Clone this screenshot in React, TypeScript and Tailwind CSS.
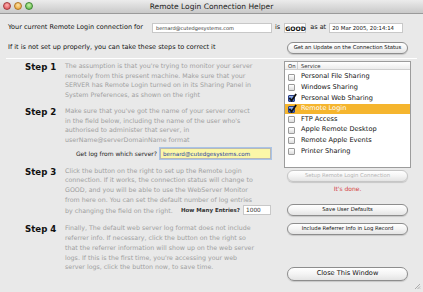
import React from "react";

const F = { fontFamily: '"DejaVu Sans", "Liberation Sans", sans-serif' } as const;

function Btn({ children, disabled, big }: { children: React.ReactNode; disabled?: boolean; big?: boolean }) {
  return (
    <div
      className={`flex items-center justify-center whitespace-nowrap rounded-full border bg-gradient-to-b from-white via-[#f4f4f4] to-[#e4e4e4] shadow-[0_1px_1px_rgba(0,0,0,0.15)] ${big ? "h-[14px] text-[6.6px]" : "h-[12px] text-[5.3px]"} ${disabled ? "text-[#b4b4b4] border-[#c6c6c6]" : "text-[#111] border-[#8d8d8d]"}`}
      style={F}
    >
      {children}
    </div>
  );
}

function Check({ on }: { on?: boolean }) {
  return (
    <div className={`w-[7px] h-[7px] rounded-[1px] border ${on ? "border-[#2a3f88] bg-gradient-to-b from-[#9bb8ef] to-[#3d66c5]" : "border-[#9a9a9a] bg-gradient-to-b from-white to-[#dcdcdc]"} relative`}>
      {on && (
        <svg viewBox="0 0 10 10" className="absolute left-[-1px] top-[-3px] w-[9px] h-[9px]">
          <path d="M1.5 5.5 L4 8.5 L9 1" fill="none" stroke="#111" strokeWidth="2" />
        </svg>
      )}
    </div>
  );
}

function StepText({ lines }: { lines: string[] }) {
  return (
    <div className="text-[6.3px] leading-[9.7px] text-[#a0a0a0]" style={F}>
      {lines.map((l, i) => (
        <div key={i} className="whitespace-nowrap">{l}</div>
      ))}
    </div>
  );
}

function Step({ n, children }: { n: number; children: React.ReactNode }) {
  return (
    <div className="flex">
      <div className="w-[65px] pl-[25px] pt-[1px] text-[8.6px] font-bold text-[#111] leading-[11px] whitespace-nowrap" style={F}>
        Step {n}
      </div>
      <div className="flex-1">{children}</div>
    </div>
  );
}

export default function App() {
  const services: { name: string; on?: boolean; sel?: boolean }[] = [
    { name: "Personal File Sharing" },
    { name: "Windows Sharing" },
    { name: "Personal Web Sharing", on: true },
    { name: "Remote Login", on: true, sel: true },
    { name: "FTP Access" },
    { name: "Apple Remote Desktop" },
    { name: "Remote Apple Events" },
    { name: "Printer Sharing" },
  ];
  return (
    <div className="w-[423px] h-[292px] bg-[#e9e9e9] overflow-hidden relative flex flex-col" style={F}>
      {/* title bar */}
      <div className="h-[14px] bg-gradient-to-b from-[#ececec] to-[#c9c9c9] border-b border-[#9a9a9a] relative flex items-center justify-center">
        <div className="absolute left-[3px] top-[2px] flex gap-[3px]">
          <div className="w-[8px] h-[8px] rounded-full bg-[radial-gradient(circle_at_50%_35%,#ffb3b3,#d9454a)] border border-[#a13a3e]" />
          <div className="w-[8px] h-[8px] rounded-full bg-[radial-gradient(circle_at_50%_35%,#ffe3a3,#e39a26)] border border-[#b07523]" />
          <div className="w-[8px] h-[8px] rounded-full bg-[radial-gradient(circle_at_50%_35%,#c8f5a8,#4fae3c)] border border-[#3e8533]" />
        </div>
        <div className="text-[7.5px] text-[#222]">Remote Login Connection Helper</div>
      </div>

      {/* row 1 */}
      <div className="flex items-center mt-[8px] pl-[8px] h-[11px] text-[6.5px] text-[#111]">
        <span className="whitespace-nowrap w-[140px]">Your current Remote Login connection for</span>
        <div className="ml-[4px] w-[120px] h-[10px] bg-white border border-[#c8c8c8] text-[5px] leading-[9px] pl-[3px] text-[#333] whitespace-nowrap">bernard@cutedgesystems.com</div>
        <span className="ml-[3px]">is</span>
        <div className="ml-[4px] w-[22px] h-[10px] bg-white border border-[#c8c8c8] text-[6.2px] leading-[9px] font-bold text-center">GOOD</div>
        <span className="ml-[4px] whitespace-nowrap">as at</span>
        <div className="ml-[3px] w-[74px] h-[10px] bg-white border border-[#c8c8c8] text-[5.4px] leading-[9px] pl-[2px] whitespace-nowrap">20 Mar 2005, 20:14:14</div>
      </div>

      {/* row 2 */}
      <div className="flex items-center justify-between mt-[8px] pl-[8px] pr-[15px] h-[14px]">
        <span className="text-[6.5px] text-[#111] whitespace-nowrap">If it is not set up properly, you can take these steps to correct it</span>
        <div className="w-[121px]"><Btn>Get an Update on the Connection Status</Btn></div>
      </div>

      <div className="mt-[3px] mx-[6px] h-px bg-[#c9c9c9] border-b border-white" />

      {/* main */}
      <div className="flex mt-[2px]">
        <div className="w-[280px] flex flex-col">
          <Step n={1}>
            <StepText
              lines={[
                "The assumption is that you're trying to monitor your server",
                "remotely from this present machine. Make sure that your",
                "SERVER has Remote Login turned on in its Sharing Panel in",
                "System Preferences, as shown on the right",
              ]}
            />
          </Step>
          <div className="mt-[6px]">
            <Step n={2}>
              <StepText
                lines={[
                  "Make sure that you've got the name of your server correct",
                  "in the field below, including the name of the user who's",
                  "authorised to administer that server, in",
                  "userName@serverDomainName format",
                ]}
              />
            </Step>
          </div>
          <div className="flex items-center justify-end pr-[9px] mt-[3px] h-[12px]">
            <span className="text-[6px] text-[#222] whitespace-nowrap">Get log from which server?</span>
            <div className="ml-[3px] w-[111px] h-[11px] bg-[#fbf7a8] border border-[#b8b8b8] shadow-[0_0_0_1px_#a9c4e8] text-[5.6px] leading-[10px] pl-[2px] text-[#1f3fa0] whitespace-nowrap">bernard@cutedgesystems.com</div>
          </div>
          <div className="mt-[6px]">
            <Step n={3}>
              <StepText
                lines={[
                  "Click the button on the right to set up the Remote Login",
                  "connection. If it works, the connection status will change to",
                  "GOOD, and you will be able to use the WebServer Monitor",
                  "from here on. You can set the default number of log entries",
                ]}
              />
              <div className="flex items-center h-[12px] pr-[9px]">
                <span className="text-[6.3px] text-[#a0a0a0] whitespace-nowrap">by changing the field on the right.</span>
                <span className="ml-auto text-[5.5px] font-bold text-[#333] whitespace-nowrap">How Many Entries?</span>
                <div className="ml-[3px] w-[28px] h-[10px] bg-white border border-[#c8c8c8] text-[5.8px] leading-[9px] pl-[2px] text-[#333]">1000</div>
              </div>
            </Step>
          </div>
          <div className="mt-[7px]">
            <Step n={4}>
              <StepText
                lines={[
                  "Finally, The default web server log format does not include",
                  "referrer info. If necessary, click the button on the right so",
                  "that the referrer information will show up on the web server",
                  "logs. If this is the first time, you're accessing your web",
                  "server logs, click the button now, to save time.",
                ]}
              />
            </Step>
          </div>
        </div>

        {/* right */}
        <div className="ml-[4px] w-[127px] flex flex-col">
          <div className="h-[107px] bg-white border border-[#9c9c9c]">
            <div className="flex h-[8px] border-b border-[#cfcfcf] bg-gradient-to-b from-white to-[#ececec] text-[5.3px] leading-[8px] text-[#333]">
              <div className="w-[13px] pl-[3px] border-r border-[#cfcfcf]">On</div>
              <div className="pl-[3px]">Service</div>
            </div>
            <div className="pt-[2px]">
              {services.map((s) => (
                <div key={s.name} className={`flex items-center h-[10.6px] ${s.sel ? "bg-[#f5b52e]" : ""}`}>
                  <div className="w-[13px] flex justify-center"><Check on={s.on} /></div>
                  <div className={`pl-[3px] text-[6.6px] whitespace-nowrap ${s.sel ? "text-white" : "text-[#111]"}`}>{s.name}</div>
                </div>
              ))}
            </div>
          </div>
          <div className="mt-[2px] px-[3px]"><Btn disabled>Setup Remote Login Connection</Btn></div>
          <div className="mt-[2px] text-center text-[6px] text-[#d43c3c]">It's done.</div>
          <div className="mt-[11px] px-[3px]"><Btn>Save User Defaults</Btn></div>
          <div className="mt-[7px] px-[3px]"><Btn>Include Referrer Info in Log Record</Btn></div>
          <div className="mt-[32px] px-[3px]"><Btn big>Close This Window</Btn></div>
        </div>
      </div>

      {/* resize grip */}
      <svg className="absolute right-[2px] bottom-[2px]" width="8" height="8" viewBox="0 0 8 8">
        <path d="M7 2 L2 7 M7 4.5 L4.5 7 M7 6.5 L6.5 7" stroke="#9a9a9a" strokeWidth="0.8" />
      </svg>
    </div>
  );
}
